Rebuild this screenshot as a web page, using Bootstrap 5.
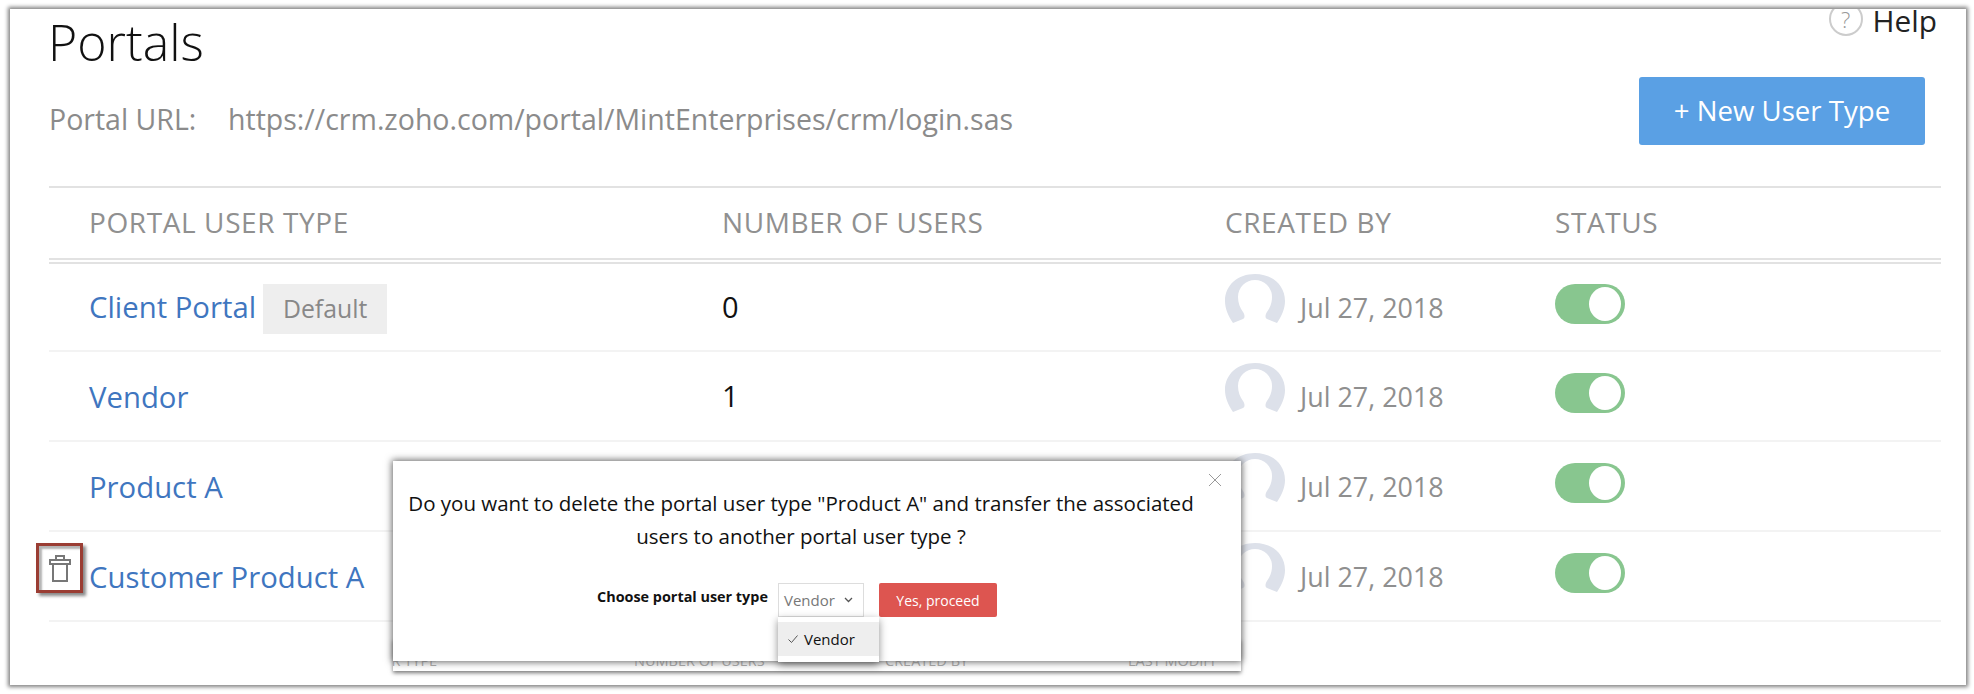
<!DOCTYPE html>
<html lang="en">
<head>
<meta charset="utf-8">
<title>Portals</title>
<link href="https://cdn.jsdelivr.net/npm/bootstrap@5.3.0/dist/css/bootstrap.min.css" rel="stylesheet">
<style>
html,body{height:694px;overflow:hidden;background:#fff}
body{font-family:"Open Sans","Liberation Sans",sans-serif}
.frame{margin:9px 0 0 10px;width:1956px;height:676px;overflow:hidden;position:relative;background:#fff;box-shadow:0 0 4px 2px #808080}
.topline{height:68px;padding:0 29px 0 38px}
.ptitle{font-size:50px;font-weight:300;color:#111;line-height:1;margin:8px 0 0}
.helpbox{margin-top:-7px;gap:11px}
.helpcirc{width:34px;height:34px;border:2px solid #ccc;border-radius:50%;color:#999;font-size:22px;line-height:30px;text-align:center;font-weight:300}
.helptxt{font-size:29.8px;line-height:34px;color:#222;margin-top:2px;margin-left:-1px}
.urlrow{height:68px;padding:0 41px 0 39px}
.urllabel{font-size:28.5px;color:#8b8b8b;width:179px;margin-top:16px}
.urlval{font-size:28.5px;color:#8b8b8b;margin-top:16px}
.newbtn{width:286px;height:68px;background:#5aa0e4;border:0;color:#fff;font-size:27.6px;font-weight:500;border-radius:3px;padding:0}
.ptable{width:1892px;margin:41px 0 0 39px;border-collapse:separate;border-spacing:0;table-layout:fixed;border-top:2px solid #e2e2e2}
.ptable.table>:not(caption)>*>*{padding:0;color:inherit;box-shadow:none;vertical-align:middle}
.ptable.table>thead>tr>th{height:76px;border-bottom:6px double #e2e2e2;color:#909090;font-size:28px;font-weight:400;letter-spacing:.6px;padding-bottom:2px}
.ptable.table>tbody>tr>td{height:90px;border-bottom:2px solid #f3f3f3;font-size:29px;color:#111}
.ptable.table>tbody>tr:first-child>td{height:88px}
.ptable.table>thead>tr>th:first-child{padding-left:40px}
.ptable.table>tbody>tr>td:first-child{padding-left:40px;padding-top:2px}
.plink{color:#3f76bf;text-decoration:none;font-size:29.3px}
.deftag{display:inline-flex;align-items:center;justify-content:center;width:124px;height:50px;background:#eee;color:#888;font-size:24.8px;margin-left:7px;margin-top:2px}
.avatar{width:60px;height:50px;margin-bottom:16px;flex:none}
.pdate{font-size:26.9px;color:#8f8f8f;margin-left:15px;margin-top:2px}
.tgl{display:block;width:70px;height:40px;border-radius:20px;background:#88c68f;position:relative;margin-bottom:6px}
.tgl::after{content:"";position:absolute;right:4px;top:3px;width:32px;height:34px;border-radius:50%;background:#fff}
.trashbox{position:absolute;left:26px;top:534px;width:47px;height:50px;border:3px solid #9a3d33;box-shadow:3px 3px 3px #8a8a8a,inset 3px 3px 2px #b5b5b5;display:flex;align-items:center;justify-content:center;background:#fff}
.underband{position:absolute;left:383px;top:630px;width:848px;height:32px;background:#fff;box-shadow:0 2px 4px #777;overflow:hidden;color:#aaa;font-size:14.5px}
.underband span{position:absolute;top:11px;white-space:nowrap}
.dlg{position:absolute;left:383px;top:452px;width:848px;height:200px;background:#fff;box-shadow:0 0 7px 1px #666}
.dlgtext{padding:26px 47px 0 15px;font-size:20.5px;line-height:33px;color:#111;text-align:center}
.dlgclose{position:absolute;right:19px;top:12px;background:none;border:0;padding:0;line-height:0}
.chooserow{padding:30px 0 0 204px}
.chooselabel{font-size:14.4px;font-weight:700;color:#111;width:181px;margin-top:-6px}
.pickwrap{position:relative;width:86px;height:34px;border:1px solid #ddd;padding:0 10px 0 5px;font-size:15px;color:#777}
.yesbtn{width:118px;height:34px;margin-left:15px;background:#dd5550;color:#fff;border:0;border-radius:2px;font-size:14px;padding:0}
.pickmenu{position:absolute;left:-1px;top:33px;width:101px;height:45px;background:#fff;box-shadow:0 3px 8px rgba(0,0,0,.45);padding-top:5px;z-index:2}
.pickitem{height:34px;background:#eee;color:#111;padding-left:10px;gap:6px;font-size:15px}
</style>
</head>
<body>
<div class="frame">
  <div class="topline d-flex justify-content-between align-items-start">
    <h1 class="ptitle">Portals</h1>
    <div class="helpbox d-flex align-items-start">
      <span class="helpcirc">?</span>
      <span class="helptxt">Help</span>
    </div>
  </div>
  <div class="urlrow d-flex justify-content-between align-items-center">
    <div class="d-flex">
      <span class="urllabel">Portal URL:</span>
      <span class="urlval">https://crm.zoho.com/portal/MintEnterprises/crm/login.sas</span>
    </div>
    <button class="btn newbtn" type="button">+ New User Type</button>
  </div>
  <table class="table ptable">
    <colgroup><col style="width:673px"><col style="width:503px"><col style="width:330px"><col style="width:386px"></colgroup>
    <thead>
      <tr><th>PORTAL USER TYPE</th><th>NUMBER OF USERS</th><th>CREATED BY</th><th>STATUS</th></tr>
    </thead>
    <tbody>
      <tr>
        <td><div class="d-flex align-items-center"><a class="plink" href="#">Client Portal</a><span class="deftag">Default</span></div></td>
        <td>0</td>
        <td><div class="d-flex align-items-center"><svg class="avatar" viewBox="0 0 60 50"><path fill="#dde1ea" d="M8 49C3 42 0 34 0 27 0 11 13 0 30 0s30 11 30 27c0 7-3 15-8 22l-10-4c-2-1-2-4 0-7 3-4 5-9 5-15C47 13 39 6 30 6S13 13 13 23c0 6 2 11 5 15 2 3 2 6 0 7z"/></svg><span class="pdate">Jul 27, 2018</span></div></td>
        <td><span class="tgl"></span></td>
      </tr>
      <tr>
        <td><a class="plink" href="#">Vendor</a></td>
        <td>1</td>
        <td><div class="d-flex align-items-center"><svg class="avatar" viewBox="0 0 60 50"><path fill="#dde1ea" d="M8 49C3 42 0 34 0 27 0 11 13 0 30 0s30 11 30 27c0 7-3 15-8 22l-10-4c-2-1-2-4 0-7 3-4 5-9 5-15C47 13 39 6 30 6S13 13 13 23c0 6 2 11 5 15 2 3 2 6 0 7z"/></svg><span class="pdate">Jul 27, 2018</span></div></td>
        <td><span class="tgl"></span></td>
      </tr>
      <tr>
        <td><a class="plink" href="#">Product A</a></td>
        <td></td>
        <td><div class="d-flex align-items-center"><svg class="avatar" viewBox="0 0 60 50"><path fill="#dde1ea" d="M8 49C3 42 0 34 0 27 0 11 13 0 30 0s30 11 30 27c0 7-3 15-8 22l-10-4c-2-1-2-4 0-7 3-4 5-9 5-15C47 13 39 6 30 6S13 13 13 23c0 6 2 11 5 15 2 3 2 6 0 7z"/></svg><span class="pdate">Jul 27, 2018</span></div></td>
        <td><span class="tgl"></span></td>
      </tr>
      <tr>
        <td><a class="plink" href="#">Customer Product A</a></td>
        <td></td>
        <td><div class="d-flex align-items-center"><svg class="avatar" viewBox="0 0 60 50"><path fill="#dde1ea" d="M8 49C3 42 0 34 0 27 0 11 13 0 30 0s30 11 30 27c0 7-3 15-8 22l-10-4c-2-1-2-4 0-7 3-4 5-9 5-15C47 13 39 6 30 6S13 13 13 23c0 6 2 11 5 15 2 3 2 6 0 7z"/></svg><span class="pdate">Jul 27, 2018</span></div></td>
        <td><span class="tgl"></span></td>
      </tr>
    </tbody>
  </table>

  <div class="trashbox">
    <svg width="22" height="27" viewBox="0 0 22 27" fill="none" stroke="#777" stroke-width="2"><path d="M7 5V1h8v4"/><rect x="1" y="5" width="20" height="4"/><path d="M4 9v17h14V9"/></svg>
  </div>

  <div class="underband">
    <span style="left:-28px">USER TYPE</span>
    <span style="left:241px">NUMBER OF USERS</span>
    <span style="left:492px">CREATED BY</span>
    <span style="left:735px">LAST MODIFI</span>
  </div>

  <div class="dlg">
    <button class="dlgclose" type="button" aria-label="Close"><svg width="14" height="14" viewBox="0 0 14 14" stroke="#999" stroke-width="1"><path d="M1 1l12 12M13 1L1 13"/></svg></button>
    <div class="dlgtext">Do you want to delete the portal user type "Product A" and transfer the associated users to another portal user type ?</div>
    <div class="chooserow d-flex align-items-center">
      <span class="chooselabel">Choose portal user type</span>
      <div class="pickwrap d-flex align-items-center justify-content-between">
        <span>Vendor</span>
        <svg width="9" height="6" viewBox="0 0 9 6" fill="none" stroke="#555" stroke-width="1.3"><path d="M1 1l3.5 3.5L8 1"/></svg>
        <div class="pickmenu">
          <div class="pickitem d-flex align-items-center">
            <svg width="10" height="8" viewBox="0 0 10 8" fill="none" stroke="#555" stroke-width="1"><path d="M.5 4.5L3.5 7.5 9.5.5"/></svg>
            <span>Vendor</span>
          </div>
        </div>
      </div>
      <button class="btn yesbtn" type="button">Yes, proceed</button>
    </div>
  </div>
</div>
<script src="https://cdn.jsdelivr.net/npm/bootstrap@5.3.0/dist/js/bootstrap.bundle.min.js"></script>
</body>
</html>
